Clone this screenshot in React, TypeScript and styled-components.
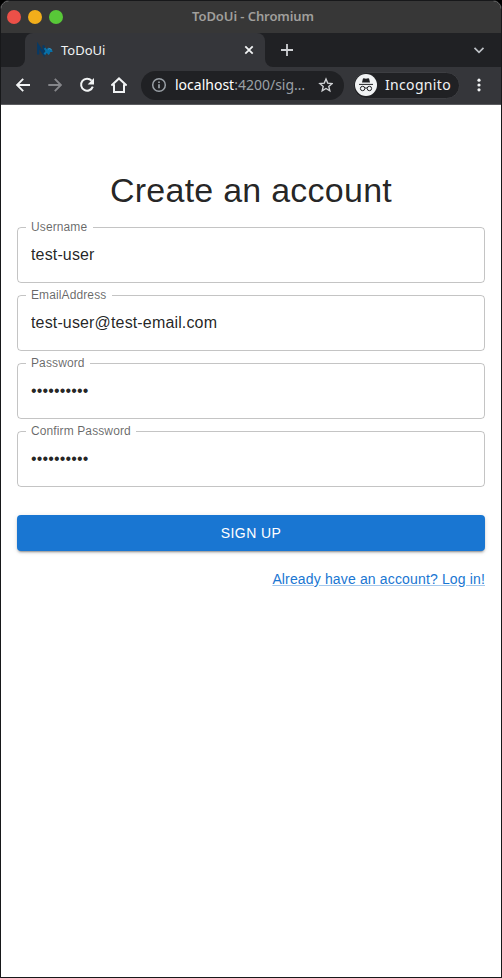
import React from "react";
import styled, { createGlobalStyle } from "styled-components";

const GlobalStyle = createGlobalStyle`
  *, *::before, *::after { box-sizing: border-box; }
  body { margin: 0; background: #000; }
`;

const Window = styled.div`
  display: flex;
  flex-direction: column;
  width: 502px;
  height: 978px;
  border: 1px solid #17181a;
  border-radius: 9px 9px 0 0;
  overflow: hidden;
  background: #fff;
  font-family: "Liberation Sans", Arial, sans-serif;
`;

const TitleBar = styled.header`
  display: grid;
  grid-template-columns: 100px 1fr 100px;
  align-items: center;
  flex: none;
  height: 32px;
  background: #373737;
`;

const WindowControls = styled.div`
  display: flex;
  gap: 7px;
  padding-left: 6px;
`;

const ControlDot = styled.span<{ $color: string }>`
  width: 14px;
  height: 14px;
  border-radius: 50%;
  background: ${(p) => p.$color};
`;

const UiText = styled.span<{
  $size: number;
  $color?: string;
  $spacing?: number;
  $weight?: number;
}>`
  font-family: "Noto Sans", "Open Sans", sans-serif;
  font-size: ${(p) => p.$size}px;
  font-weight: ${(p) => p.$weight ?? 400};
  letter-spacing: ${(p) => p.$spacing ?? 0}px;
  line-height: 18px;
  color: ${(p) => p.$color ?? "#f1f3f4"};
  white-space: nowrap;
`;

const WindowTitle = styled(UiText)`
  text-align: center;
  padding: 0 0 2px 4px;
`;

const TabStrip = styled.div`
  display: flex;
  flex: none;
  height: 34px;
  background: linear-gradient(#202124 50%, #35363a 50%);
`;

const StripStart = styled.div`
  width: 24px;
  background: #202124;
  border-bottom-right-radius: 8px;
`;

const StripEnd = styled.div`
  display: flex;
  flex: 1;
  align-items: center;
  justify-content: space-between;
  padding: 0 15px 0 14px;
  background: #202124;
  border-bottom-left-radius: 8px;
`;

const Tab = styled.div`
  display: flex;
  align-items: center;
  width: 240px;
  padding: 0 10px 0 12px;
  border-radius: 8px 8px 0 0;
  background: #35363a;
`;

const TabTitle = styled(UiText)`
  flex: 1;
  padding-left: 8px;
`;

const Toolbar = styled.div`
  display: flex;
  align-items: center;
  flex: none;
  height: 38px;
  padding: 0 14px 1px 14px;
  background: #35363a;
  border-bottom: 1px solid #5b5c5f;
`;

const NavButtons = styled.div`
  display: flex;
  flex: none;
  gap: 16px;
  margin-right: 14px;
`;

const AddressBar = styled.div`
  display: flex;
  align-items: center;
  flex: none;
  width: 203px;
  height: 29px;
  padding: 0 11px 0 10px;
  border-radius: 15px;
  background: #202124;
`;

const Url = styled(UiText)`
  flex: 1;
  padding-left: 8px;
`;

const Host = styled.span`
  color: #fff;
`;

const IncognitoChip = styled.div`
  display: flex;
  align-items: center;
  flex: none;
  gap: 8px;
  width: 107px;
  height: 27px;
  margin: 0 11px 0 9px;
  padding-left: 1px;
  border: 1px solid #3d3e42;
  border-radius: 14px;
  background: #202124;
`;

const Icon = styled.svg`
  display: block;
  flex: none;
`;

const Page = styled.main`
  display: flex;
  flex: 1;
  flex-direction: column;
  padding: 64px 16px 0;
  color: rgba(0, 0, 0, 0.87);
`;

const Heading = styled.h1`
  margin: 0 0 16px;
  font-size: 34px;
  font-weight: 400;
  line-height: 42px;
  letter-spacing: 0.00735em;
  text-align: center;
`;

const Form = styled.form`
  display: flex;
  flex-direction: column;
  gap: 12px;
`;

const Field = styled.div`
  position: relative;
  height: 56px;
  border: 1px solid rgba(0, 0, 0, 0.23);
  border-radius: 4px;
`;

const FieldLabel = styled.label`
  position: absolute;
  top: -9px;
  left: 8px;
  padding: 0 5.5px 0 5px;
  background: #fff;
  color: rgba(0, 0, 0, 0.6);
  font-size: 12px;
  line-height: 17px;
  letter-spacing: 0.00938em;
`;

const FieldInput = styled.input`
  display: block;
  width: 100%;
  height: 54px;
  padding: 0 13px;
  border: 0;
  outline: 0;
  background: transparent;
  color: rgba(0, 0, 0, 0.87);
  font: 400 16px "Liberation Sans", Arial, sans-serif;
  letter-spacing: 0.00938em;
`;

const SubmitButton = styled.button`
  height: 36px;
  margin-top: 16px;
  border: 0;
  border-radius: 4px;
  background: #1976d2;
  color: #fff;
  font: 400 14px/24px "Liberation Sans", Arial, sans-serif;
  letter-spacing: 0.02857em;
  box-shadow: 0 3px 1px -2px rgba(0, 0, 0, 0.2), 0 2px 2px rgba(0, 0, 0, 0.14),
    0 1px 5px rgba(0, 0, 0, 0.12);
`;

const LoginLink = styled.a`
  align-self: flex-end;
  margin-top: 18px;
  color: #1976d2;
  font-size: 14px;
  line-height: 20px;
  letter-spacing: 0.01071em;
  text-decoration: underline;
  text-decoration-color: rgba(25, 118, 210, 0.4);
`;

const fields = [
  { id: "username", label: "Username", type: "text", value: "test-user" },
  { id: "email", label: "EmailAddress", type: "text", value: "test-user@test-email.com" },
  { id: "password", label: "Password", type: "password", value: "abcdefghij" },
  { id: "confirm", label: "Confirm Password", type: "password", value: "abcdefghij" },
];

const NxLogo = () => (
  <Icon width="16" height="16" viewBox="0 0 16 16" fill="none">
    <path d="M1.2 12.6V3.4L6.6 12V3.2" stroke="#073a66" strokeWidth="2.2" />
    <path d="m7.6 6.2 4.6 6.2M12 6.2l-4.6 6.2" stroke="#0770a8" strokeWidth="2.1" />
    <path d="M10.5 8.8c.6-3.4 4-3.4 4.7-.4l.5 1.6h-2.2l-1.3 1.5z" fill="#0770a8" />
    <path d="M11.2 7.3c1.2-1.5 2.6-.5 3.3.8" stroke="#4a91b8" />
  </Icon>
);

const ArrowIcon = ({ forward = false }: { forward?: boolean }) => (
  <Icon width="16" height="16" viewBox="0 0 16 16" fill="none"
    stroke={forward ? "#85868a" : "#f1f3f4"} strokeWidth="1.9">
    <path d={forward ? "M1.3 8h12.2M7.8 1.9 13.9 8l-6.1 6.1" : "M15 8H2.5M8.2 1.9 2.1 8l6.1 6.1"} />
  </Icon>
);

const ReloadIcon = () => (
  <Icon width="16" height="16" viewBox="0 0 16 16">
    <path d="M12.6 3.7A6 6 0 1 0 13.8 9.6" fill="none" stroke="#f1f3f4" strokeWidth="2" />
    <path d="M15 1v6.4H8.6z" fill="#f1f3f4" />
  </Icon>
);

const HomeIcon = () => (
  <Icon width="16" height="16" viewBox="0 0 16 16" fill="none" stroke="#f1f3f4" strokeWidth="2">
    <path d="M.4 8.6 8 1.4l7.6 7.2M3 7.2V15h10V7.2" />
  </Icon>
);

const InfoIcon = () => (
  <Icon width="16" height="16" viewBox="0 0 16 16" fill="none" stroke="#9aa0a6" strokeWidth="1.5">
    <circle cx="8" cy="8" r="6.3" />
    <path d="M8 7.2v4.1M8 4.5v1.6" strokeWidth="1.7" />
  </Icon>
);

const StarIcon = () => (
  <Icon width="16" height="16" viewBox="0 0 16 16" fill="none" stroke="#d0d2d5" strokeWidth="1.4">
    <path d="m9 2 1.7 4.1 4.4.4-3.3 2.9 1 4.4L9 11.5l-3.8 2.3 1-4.4-3.3-2.9 4.4-.4z" />
  </Icon>
);

const IncognitoIcon = () => (
  <Icon width="22" height="22" viewBox="0 0 22 22">
    <circle cx="11" cy="11" r="11" fill="#f1f3f4" />
    <path d="m7 8.6.9-3.8q.3-.7 1-.5l2.1.5 2.1-.5q.7-.2 1 .5l.9 3.8z" fill="#202124" />
    <path d="M4 10.4h14M10 14.2q1-.7 2 0" fill="none" stroke="#202124" strokeWidth="1" />
    <circle cx="7.6" cy="14.5" r="2.2" fill="none" stroke="#202124" strokeWidth="1" />
    <circle cx="14.4" cy="14.5" r="2.2" fill="none" stroke="#202124" strokeWidth="1" />
  </Icon>
);

export default function App() {
  return (
    <>
      <GlobalStyle />
      <Window>
        <TitleBar>
          <WindowControls>
            <ControlDot $color="#ec5048" />
            <ControlDot $color="#f2ae1b" />
            <ControlDot $color="#58c838" />
          </WindowControls>
          <WindowTitle $size={13} $weight={600} $color="#a09f9c" $spacing={-0.08}>ToDoUi - Chromium</WindowTitle>
        </TitleBar>
        <TabStrip>
          <StripStart />
          <Tab>
            <NxLogo />
            <TabTitle $size={13}>ToDoUi</TabTitle>
            <Icon width="12" height="12" viewBox="0 0 12 12" stroke="#f1f3f4" strokeWidth="1.8">
              <path d="m2.3 2.3 7.4 7.4m0-7.4L2.3 9.7" />
            </Icon>
          </Tab>
          <StripEnd>
            <Icon width="16" height="16" viewBox="0 0 16 16" stroke="#d0d2d5" strokeWidth="1.8">
              <path d="M8 2v12M2 8h12" />
            </Icon>
            <Icon width="14" height="14" viewBox="0 0 14 14" fill="none" stroke="#bdc1c6" strokeWidth="1.7">
              <path d="m2.5 4.8 4.5 4.5 4.5-4.5" />
            </Icon>
          </StripEnd>
        </TabStrip>
        <Toolbar>
          <NavButtons>
            <ArrowIcon />
            <ArrowIcon forward />
            <ReloadIcon />
            <HomeIcon />
          </NavButtons>
          <AddressBar>
            <InfoIcon />
            <Url $size={14} $color="#9aa0a6"><Host>localhost</Host>:4200/sig…</Url>
            <StarIcon />
          </AddressBar>
          <IncognitoChip>
            <IncognitoIcon />
            <UiText $size={14} $spacing={0.33}>Incognito</UiText>
          </IncognitoChip>
          <Icon width="16" height="16" viewBox="0 0 16 16" fill="#f1f3f4">
            <circle cx="8" cy="3.2" r="1.6" />
            <circle cx="8" cy="8" r="1.6" />
            <circle cx="8" cy="12.8" r="1.6" />
          </Icon>
        </Toolbar>
        <Page>
          <Heading>Create an account</Heading>
          <Form>
            {fields.map((f) => (
              <Field key={f.id}>
                <FieldLabel htmlFor={f.id}>{f.label}</FieldLabel>
                <FieldInput id={f.id} type={f.type} defaultValue={f.value} />
              </Field>
            ))}
            <SubmitButton type="button">SIGN UP</SubmitButton>
          </Form>
          <LoginLink href="#">Already have an account? Log in!</LoginLink>
        </Page>
      </Window>
    </>
  );
}
